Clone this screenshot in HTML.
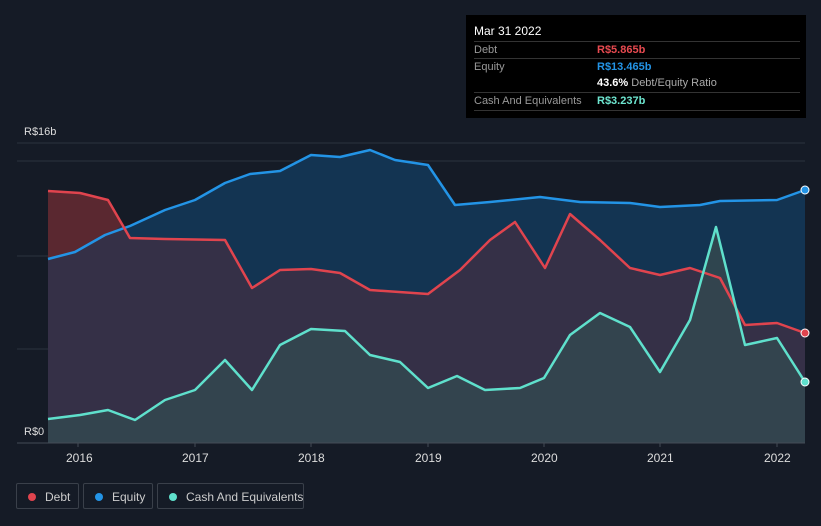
<!DOCTYPE html>
<html><head><meta charset="utf-8"><style>
body{margin:0;width:821px;height:526px;background:#151b26;font-family:"Liberation Sans",sans-serif;overflow:hidden;position:relative}
.tt{position:absolute;left:466px;top:15px;width:340px;height:103px;background:#000;color:#fff;font-size:11px}
.tt .r{position:absolute;left:8px;right:6px;border-top:1px solid #333;height:17px;line-height:17px;color:#999}
.tt b{font-weight:bold;position:absolute;left:123px}
.leg{position:absolute;top:483px;height:26px;border:1px solid #3a404a;border-radius:2px;color:#ccc;font-size:12px;line-height:26px;box-sizing:border-box;white-space:nowrap}
.leg i{position:absolute;left:11px;top:9px;width:8px;height:8px;border-radius:50%}
.leg span{position:absolute;left:28px}
.ax{position:absolute;top:451px;color:#ddd;font-size:12px}
</style></head><body>
<svg width="821" height="526" style="position:absolute;left:0;top:0">
<line x1="17" y1="143" x2="805" y2="143" stroke="#2c333f"/>
<line x1="17" y1="161" x2="805" y2="161" stroke="#2c333f"/>
<line x1="17" y1="256" x2="805" y2="256" stroke="#2c333f"/>
<line x1="17" y1="349" x2="805" y2="349" stroke="#2c333f"/>
<polygon fill="#133452" points="48,443 48,259 75,252 105,235 130,226 165,210 195,200 225,183 250,174 280,171 311,155 340,157 370,150 395,160 428,165 455,205 490,202 540,197 580,202 630,203 660,207 700,205 720,201 777,200 805,190 805,443"/>
<polygon fill="#3a3046" fill-opacity="0.9" points="48,443 48,191 80,193 108,200 130,238 165,239 225,240 252,288 280,270 311,269 340,273 370,290 428,294 460,270 490,240 515,222 545,268 570,214 600,240 630,268 660,275 690,268 720,278 745,325 777,323 805,333 805,443"/>
<polygon fill="#5a2830" points="48,191 80,193 108,200 122,225 110,234 75,252 48,259"/>
<polygon fill="#33474f" fill-opacity="0.9" points="48,443 48,419 80,415 108,410 135,420 165,400 195,390 225,360 252,390 280,345 311,329 345,331 370,355 400,362 428,388 457,376 485,390 520,388 544,378 570,335 600,313 630,327 660,372 690,320 716,227 745,345 777,338 805,382 805,443"/>
<g fill="none" stroke-width="2.5" stroke-linejoin="round">
<polyline stroke="#2394e6" points="48,259 75,252 105,235 130,226 165,210 195,200 225,183 250,174 280,171 311,155 340,157 370,150 395,160 428,165 455,205 490,202 540,197 580,202 630,203 660,207 700,205 720,201 777,200 805,190"/>
<polyline stroke="#e0444e" points="48,191 80,193 108,200 130,238 165,239 225,240 252,288 280,270 311,269 340,273 370,290 428,294 460,270 490,240 515,222 545,268 570,214 600,240 630,268 660,275 690,268 720,278 745,325 777,323 805,333"/>
<polyline stroke="#5fe0cc" points="48,419 80,415 108,410 135,420 165,400 195,390 225,360 252,390 280,345 311,329 345,331 370,355 400,362 428,388 457,376 485,390 520,388 544,378 570,335 600,313 630,327 660,372 690,320 716,227 745,345 777,338 805,382"/>
</g>
<circle cx="805" cy="190" r="4" fill="#2394e6" stroke="#fff"/>
<circle cx="805" cy="333" r="4" fill="#e0444e" stroke="#fff"/>
<circle cx="805" cy="382" r="4" fill="#5fe0cc" stroke="#fff"/>
<rect x="17" y="420" width="31" height="23" fill="#151b26"/>
<line x1="17" y1="443" x2="805" y2="443" stroke="#444b55"/>
<g stroke="#444b55"><line x1="78" y1="443" x2="78" y2="447"/><line x1="195" y1="443" x2="195" y2="447"/><line x1="311" y1="443" x2="311" y2="447"/><line x1="428" y1="443" x2="428" y2="447"/><line x1="544" y1="443" x2="544" y2="447"/><line x1="660" y1="443" x2="660" y2="447"/><line x1="777" y1="443" x2="777" y2="447"/></g>
<text x="24" y="135" fill="#ddd" font-size="11" font-family="Liberation Sans">R$16b</text>
<text x="24" y="435" fill="#ddd" font-size="11" font-family="Liberation Sans">R$0</text>
</svg>
<div class="ax" style="left:66px">2016</div><div class="ax" style="left:182px">2017</div><div class="ax" style="left:298px">2018</div><div class="ax" style="left:415px">2019</div><div class="ax" style="left:531px">2020</div><div class="ax" style="left:647px">2021</div><div class="ax" style="left:764px">2022</div>
<div class="tt">
<div style="position:absolute;left:8px;top:9px;font-size:12px">Mar 31 2022</div>
<div class="r" style="top:26px">Debt<b style="color:#e84a50">R$5.865b</b></div>
<div class="r" style="top:43px">Equity<b style="color:#2394e6">R$13.465b</b></div>
<div class="r" style="top:60px;border-top:none"><b style="color:#fff">43.6% <span style="font-weight:normal;color:#aaa">Debt/Equity Ratio</span></b></div>
<div class="r" style="top:77px">Cash And Equivalents<b style="color:#6ee6d0">R$3.237b</b></div>
<div class="r" style="top:95px;height:0"></div>
</div>
<div class="leg" style="left:16px;width:63px"><i style="background:#e0444e"></i><span>Debt</span></div>
<div class="leg" style="left:83px;width:70px"><i style="background:#2394e6"></i><span>Equity</span></div>
<div class="leg" style="left:157px;width:147px"><i style="background:#5fe0cc"></i><span>Cash And Equivalents</span></div>
</body></html>
